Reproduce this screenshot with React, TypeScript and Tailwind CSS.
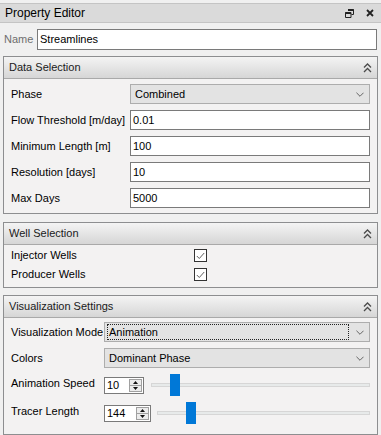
import { ReactNode } from "react";

const FONT = "font-['Liberation_Sans',Arial,sans-serif]";

function HeaderChevron() {
  return (
    <svg width="9" height="10" viewBox="0 0 9 10" className="shrink-0">
      <path d="M1 4.5 L4.5 1 L8 4.5" fill="none" stroke="#4b4b4b" strokeWidth="1.3" />
      <path d="M1 9 L4.5 5.5 L8 9" fill="none" stroke="#4b4b4b" strokeWidth="1.3" />
    </svg>
  );
}

function GroupBox({ title, children, className }: { title: string; children: ReactNode; className?: string }) {
  return (
    <div className={`ml-[3px] w-[375px] border border-[#8d8e90] bg-[#f3f2f2] ${className ?? ""}`}>
      <div className="flex h-[22px] items-center justify-between border-b border-[#a9a9a9] bg-gradient-to-b from-[#f4f4f4] to-[#d6d6d6] pl-[5px] pr-[5px]">
        <span className="text-[11px] text-[#1a1a1a]">{title}</span>
        <HeaderChevron />
      </div>
      {children}
    </div>
  );
}

function DropArrow() {
  return (
    <svg width="9" height="5" viewBox="0 0 9 5">
      <path d="M0.5 0.5 L4.5 4.5 L8.5 0.5" fill="none" stroke="#555" strokeWidth="1" />
    </svg>
  );
}

function ComboBox({ value, focused }: { value: string; focused?: boolean }) {
  return (
    <div className="flex h-[20px] flex-1 items-center border border-[#adadad] bg-[#e3e3e3] pl-[2px] pr-[5px]">
      <div
        className={`flex h-[16px] flex-1 items-center pl-[1px] ${
          focused ? "border border-dotted border-[#222]" : "border border-transparent"
        }`}
      >
        <span className="text-[11px] text-black">{value}</span>
      </div>
      <div className="ml-[7px] flex w-[8px] justify-center">
        <DropArrow />
      </div>
    </div>
  );
}

function TextBox({ value }: { value: string }) {
  return (
    <div className="flex h-[20px] flex-1 items-center border border-[#7a7a7a] bg-white pl-[2px]">
      <span className="text-[11px] text-black">{value}</span>
    </div>
  );
}

function SpinBox({ value, width }: { value: string; width: string }) {
  return (
    <div className={`flex h-[17px] shrink-0 items-stretch border border-[#7a7a7a] bg-white ${width}`}>
      <span className="flex flex-1 items-center pl-[2px] text-[11px] text-black">{value}</span>
      <div className="m-[1px] flex w-[13px] flex-col border border-[#a0a0a0] bg-[#ececec]">
        <div className="flex flex-1 items-center justify-center border-b border-[#a0a0a0]">
          <svg width="5" height="3" viewBox="0 0 5 3">
            <path d="M0 3 L2.5 0 L5 3 Z" fill="#111" />
          </svg>
        </div>
        <div className="flex flex-1 items-center justify-center">
          <svg width="5" height="3" viewBox="0 0 5 3">
            <path d="M0 0 L2.5 3 L5 0 Z" fill="#111" />
          </svg>
        </div>
      </div>
    </div>
  );
}

function Slider({ handleLeft }: { handleLeft: string }) {
  return (
    <div className="relative h-[22px] flex-1">
      <div className="mt-[9px] h-[4px] w-full border border-[#d6d6d6] bg-[#e7eaea]" />
      <div className={`absolute top-0 h-[22px] w-[10px] bg-[#0078d7] ${handleLeft}`} />
    </div>
  );
}

function CheckBox() {
  return (
    <div className="flex h-[13px] w-[13px] items-center justify-center border border-[#333] bg-white">
      <svg width="9" height="8" viewBox="0 0 9 8">
        <path d="M0.8 4 L3.3 6.5 L8.2 1" fill="none" stroke="#606060" strokeWidth="1" />
      </svg>
    </div>
  );
}

function DataRow({ label, children }: { label: string; children: ReactNode }) {
  return (
    <div className="flex h-[20px] items-center">
      <span className="w-[119px] shrink-0 text-[11px] text-black">{label}</span>
      {children}
    </div>
  );
}

export default function App() {
  return (
    <div className={`h-[435px] w-[381px] overflow-hidden bg-[#f0f0f0] pt-[3px] ${FONT}`}>
      <header className="flex h-[20px] items-center justify-between border-y border-[#c4c4c4] bg-[#dadada] pl-[5px] pr-[7px]">
        <span className="text-[12px] text-black">Property Editor</span>
        <div className="flex items-center gap-[12px]">
          <svg width="9" height="9" viewBox="0 0 9 9">
            <path d="M3 0.5 H8.5 V5.5 H6.5" fill="none" stroke="#222" strokeWidth="1" />
            <path d="M3 1 H8.5" stroke="#222" strokeWidth="2" />
            <path d="M0.5 3.5 H6 V8.5 H0.5 Z" fill="none" stroke="#222" strokeWidth="1" />
            <path d="M0.5 4 H6" stroke="#222" strokeWidth="2" />
          </svg>
          <svg width="8" height="8" viewBox="0 0 8 8">
            <path d="M1 1 L7 7 M7 1 L1 7" stroke="#222" strokeWidth="1.8" />
          </svg>
        </div>
      </header>

      <div className="mt-[6px] flex h-[21px] items-center pl-[4px] pr-[4px]">
        <span className="w-[33px] text-[11px] text-[#6e6e6e]">Name</span>
        <div className="flex h-[21px] flex-1 items-center border border-[#7a7a7a] bg-white pl-[2px]">
          <span className="text-[11px] text-black">Streamlines</span>
        </div>
      </div>

      <GroupBox title="Data Selection" className="mt-[6px]">
        <div className="flex flex-col gap-[6px] pb-[5px] pl-[7px] pr-[7px] pt-[5px]">
          <DataRow label="Phase">
            <ComboBox value="Combined" />
          </DataRow>
          <DataRow label="Flow Threshold [m/day]">
            <TextBox value="0.01" />
          </DataRow>
          <DataRow label="Minimum Length [m]">
            <TextBox value="100" />
          </DataRow>
          <DataRow label="Resolution [days]">
            <TextBox value="10" />
          </DataRow>
          <DataRow label="Max Days">
            <TextBox value="5000" />
          </DataRow>
        </div>
      </GroupBox>

      <GroupBox title="Well Selection" className="mt-[8px]">
        <div className="flex flex-col pb-[3px] pl-[7px] pr-[7px] pt-[1px]">
          {["Injector Wells", "Producer Wells"].map((w) => (
            <div key={w} className="flex h-[19px] items-center">
              <span className="w-[183px] shrink-0 text-[11px] text-black">{w}</span>
              <CheckBox />
            </div>
          ))}
        </div>
      </GroupBox>

      <GroupBox title="Visualization Settings" className="mt-[7px]">
        <div className="flex flex-col gap-[6px] pb-[10px] pl-[7px] pr-[7px] pt-[4px]">
          <div className="flex h-[20px] items-center">
            <span className="w-[93px] shrink-0 text-[11px] text-black">Visualization Mode</span>
            <ComboBox value="Animation" focused />
          </div>
          <div className="flex h-[20px] items-center">
            <span className="w-[93px] shrink-0 text-[11px] text-black">Colors</span>
            <ComboBox value="Dominant Phase" />
          </div>
          <div className="flex h-[22px] items-start">
            <span className="w-[93px] shrink-0 pt-[1px] text-[11px] text-black">Animation Speed</span>
            <div className="mt-[3px]">
              <SpinBox value="10" width="w-[40px]" />
            </div>
            <div className="ml-[7px] flex flex-1">
              <Slider handleLeft="left-[19px]" />
            </div>
          </div>
          <div className="flex h-[22px] items-start">
            <span className="w-[93px] shrink-0 pt-[1px] text-[11px] text-black">Tracer Length</span>
            <div className="mt-[3px]">
              <SpinBox value="144" width="w-[47px]" />
            </div>
            <div className="ml-[6px] flex flex-1">
              <Slider handleLeft="left-[29px]" />
            </div>
          </div>
        </div>
      </GroupBox>
    </div>
  );
}
